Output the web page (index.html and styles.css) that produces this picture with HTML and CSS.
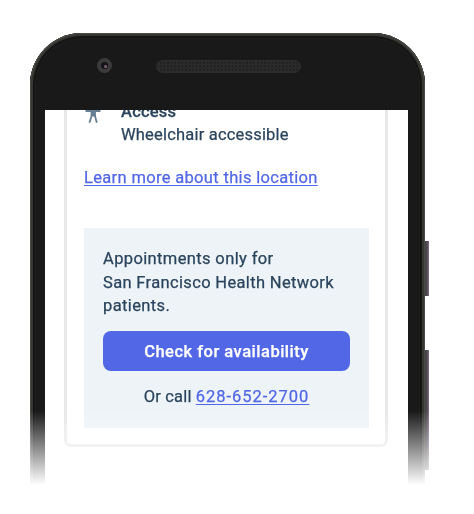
FILE: index.html
```html
<!DOCTYPE html>
<html lang="en">
<head>
<meta charset="utf-8">
<title>Location details</title>
<link rel="stylesheet" href="styles.css">
</head>
<body>
<main class="phone">
  <div class="body">
    <div class="bezel">
      <span class="camera"></span>
      <span class="speaker"></span>
    </div>
    <div class="screen">
      <section class="card">
        <div class="access">
          <svg class="person" viewBox="0 0 18 24" width="18" height="24" fill="none" stroke="#677e92" stroke-width="1.800">
            <circle cx="9" cy="4.500" r="2"/>
            <path d="M1.500 11H16.500M7.500 11v5L5.500 22.800M11 11v5l1.800 6.800M7 16.200l2-.8 2 .8"/>
            <path d="M9.200 11v5" stroke-width="4"/>
          </svg>
          <div class="details">
            <div class="access-title">Access</div>
            <div class="access-text">Wheelchair accessible</div>
          </div>
        </div>
        <a class="more">Learn more about this location</a>
        <div class="panel">
          <p class="notice"><span class="n1">Appointments only for</span><br><span class="n2">San Francisco Health Network</span><br><span class="n3">patients.</span></p>
          <button class="check"><span>Check for availability</span></button>
          <p class="call"><span class="or">Or call</span><a class="number">628-652-2700</a></p>
        </div>
      </section>
    </div>
  </div>
  <span class="key power"></span>
  <span class="key volume"></span>
</main>
</body>
</html>
```
FILE: styles.css
```css
* { box-sizing: border-box; }
body {
  margin: 0;
  height: 514px;
  overflow: hidden;
  background: #fff;
  padding: 33px 0 0 30px;
  font: 16.5px/23.3px Roboto, "Liberation Sans", sans-serif;
  color: #2b445d;
  -webkit-text-stroke: .25px currentColor;
}
.phone {
  position: relative;
  width: 399px;
  height: 453px;
  -webkit-mask-image: linear-gradient(#000 378px, transparent 452px);
  mask-image: linear-gradient(#000 378px, transparent 452px);
}
.body {
  width: 395px;
  height: 453px;
  padding: 0 17px 0 15px;
  border-radius: 52px 52px 0 0;
  background: #191919;
  box-shadow: inset 0 0 0 1px #4b4c48, inset 0 0 0 3px #353632, inset 0 0 0 5px #151515, inset 0 0 0 6px #1d1d1d;
  overflow: hidden;
}
.bezel {
  height: 77px;
  display: flex;
  align-items: flex-start;
  padding: 25px 0 0 52px;
}
.camera {
  width: 15px;
  height: 15px;
  border-radius: 50%;
  border: 4px solid #3b3b3b;
  background: radial-gradient(circle at 65% 65%, #76606a 0 1px, #17131a 2px);
}
.speaker {
  width: 145px;
  height: 13px;
  margin: 2px 0 0 44px;
  border-radius: 7px;
  border: 1px solid #2d2d2d;
  background: radial-gradient(circle, #1d1d1d 0 .6px, transparent 1px) 2px 0 / 3.6px 3.5px, #2b2b2b;
}
.screen {
  height: 376px;
  background: #fff;
  padding: 0 20px;
  overflow: hidden;
}
.card {
  width: 324px;
  height: 357px;
  margin: -20px 0 0 -1px;
  padding: 7px 16px 0 17px;
  border: 3px solid #e8e8e8;
  border-radius: 7px;
}
.access { display: flex; height: 46px; }
.person { margin: 0 19px 0 0; flex: none; }
.access-title { font-weight: 500; letter-spacing: .2px; }
.access-text { letter-spacing: .19px; }
.more {
  display: block;
  margin-top: 20px;
  color: #5267e6;
  text-decoration: underline;
  text-underline-offset: 2px;
  text-decoration-thickness: 1px;
  letter-spacing: .33px;
  white-space: nowrap;
}
.panel {
  width: 285px;
  height: 200px;
  margin-top: 39px;
  padding: 19px;
  background: #edf3f7;
}
.notice { margin: 0; white-space: nowrap; height: 84px; letter-spacing: .37px; }
.n2 { letter-spacing: .34px; }
.check {
  display: block;
  width: 247px;
  height: 40px;
  padding: 0;
  border: 0;
  border-radius: 8px;
  background: #5267e6;
  color: #fff;
  font: 500 16.5px/41px Roboto, sans-serif;
  letter-spacing: .5px;
  -webkit-text-stroke: .25px currentColor;
}
.call { margin: 14px 0 0; display: flex; justify-content: center; gap: 4px; }
.or { letter-spacing: .2px; }
.number {
  color: #5267e6;
  text-decoration: underline;
  text-underline-offset: 2px;
  text-decoration-thickness: 1px;
  letter-spacing: .98px;
}
.key {
  position: absolute;
  left: 395px;
  width: 4px;
  background: linear-gradient(90deg, #3f3b42, #575259 60%, #77727a);
}
.power { top: 208px; height: 55px; }
.volume { top: 317px; height: 120px; }
```
